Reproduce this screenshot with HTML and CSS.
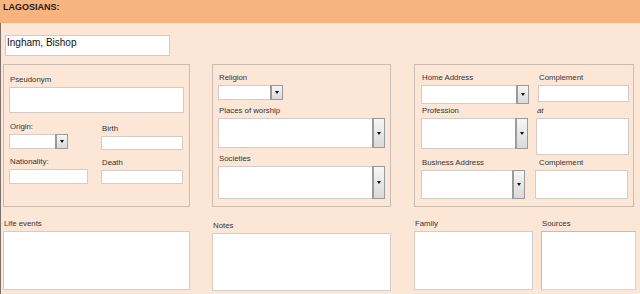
FILE: index.html
```html
<!DOCTYPE html>
<html lang="en">
<head>
<meta charset="utf-8">
<title>Lagosians</title>
<link rel="stylesheet" href="styles.css">
</head>
<body>
<header class="title-bar">LAGOSIANS:</header>
<main class="form">
  <div class="name-box">Ingham, Bishop</div>

  <div class="groups">
    <section class="group group-personal">
      <div class="field f-pseudo">
        <label class="lbl">Pseudonym</label>
        <div class="box pseudo"></div>
      </div>
      <div class="pair">
        <div class="col col-l1">
          <div class="field f-origin">
            <label class="lbl">Origin:</label>
            <div class="box combo origin"><span class="drop"><i class="tri"></i></span></div>
          </div>
          <div class="field f-nat">
            <label class="lbl">Nationality:</label>
            <div class="box nat"></div>
          </div>
        </div>
        <div class="col col-r1">
          <div class="field f-birth">
            <label class="lbl">Birth</label>
            <div class="box date"></div>
          </div>
          <div class="field f-death">
            <label class="lbl">Death</label>
            <div class="box date"></div>
          </div>
        </div>
      </div>
    </section>

    <section class="group group-faith">
      <div class="field f-religion">
        <label class="lbl">Religion</label>
        <div class="box combo religion"><span class="drop"><i class="tri"></i></span></div>
      </div>
      <div class="field f-places">
        <label class="lbl">Places of worship</label>
        <div class="box combo places"><span class="drop"><i class="tri"></i></span></div>
      </div>
      <div class="field f-soc">
        <label class="lbl">Societies</label>
        <div class="box combo soc"><span class="drop"><i class="tri"></i></span></div>
      </div>
    </section>

    <section class="group group-address">
      <div class="col col-l3">
        <div class="field f-home">
          <label class="lbl">Home Address</label>
          <div class="box combo home"><span class="drop"><i class="tri"></i></span></div>
        </div>
        <div class="field f-prof">
          <label class="lbl">Profession</label>
          <div class="box combo prof"><span class="drop"><i class="tri"></i></span></div>
        </div>
        <div class="field f-bus">
          <label class="lbl">Business Address</label>
          <div class="box combo bus"><span class="drop"><i class="tri"></i></span></div>
        </div>
      </div>
      <div class="col col-r3">
        <div class="field f-comp1">
          <label class="lbl">Complement</label>
          <div class="box comp1"></div>
        </div>
        <div class="field f-at">
          <label class="lbl lbl-it">at</label>
          <div class="box at"></div>
        </div>
        <div class="field f-comp2">
          <label class="lbl">Complement</label>
          <div class="box comp2"></div>
        </div>
      </div>
    </section>
  </div>

  <div class="bottom">
    <div class="field f-life">
      <label class="lbl">Life events</label>
      <div class="box memo life"></div>
    </div>
    <div class="field f-notes">
      <label class="lbl">Notes</label>
      <div class="box memo notes"></div>
    </div>
    <div class="field f-family">
      <label class="lbl">Family</label>
      <div class="box memo family"></div>
    </div>
    <div class="field f-sources">
      <label class="lbl">Sources</label>
      <div class="box memo sources"></div>
    </div>
  </div>
</main>
</body>
</html>
```

FILE: styles.css
```css
* { box-sizing: border-box; margin: 0; padding: 0; }

html, body {
  width: 640px;
  height: 294px;
  overflow: hidden;
}

body {
  background: #fce7d6;
  font-family: "Liberation Sans", Arial, sans-serif;
  color: #262626;
}

.title-bar {
  height: 23px;
  background: #f8b47e;
  padding: 2px 0 0 3px;
  font-size: 9px;
  line-height: 11px;
  font-weight: bold;
  color: #1a1a1a;
}

.form {
  height: 271px;
  border-left: 1px solid #7b716a;
  padding: 12px 0 0 2px;
}

.name-box {
  margin-left: 2px;
  width: 165px;
  height: 21px;
  background: #fff;
  border: 1px solid #d2cbc5;
  padding-left: 1px;
  font-size: 10px;
  line-height: 14px;
  color: #111;
}

/* rows */
.groups {
  display: flex;
  margin-top: 8px;
}

.group {
  height: 143px;
  border: 1px solid #c9bdb2;
  padding-top: 0;
}

.group-personal { width: 187px; padding-left: 5px; }
.group-faith    { width: 179px; margin-left: 22px; padding-left: 5px; }
.group-address  { width: 220px; margin-left: 23px; padding-left: 6px; display: flex; }

.field { display: flex; flex-direction: column; align-items: flex-start; }

.lbl {
  display: block;
  height: 10px;
  font-size: 7.8px;
  line-height: 10px;
  padding-left: 1px;
  margin-bottom: 2px;
  color: #333;
  white-space: nowrap;
}
.lbl-it { font-style: italic; padding-left: 2px; }

.box {
  background: #fff;
  border: 1px solid #d4cdc7;
  position: relative;
}

.combo { display: flex; justify-content: flex-end; }

.drop {
  width: 11px;
  height: 100%;
  border-left: 1px solid #9c9c9c;
  outline: 1px solid #9a9a9a;
  outline-offset: 0;
  background: linear-gradient(#f6f6f6, #d9d9d9);
  display: flex;
  align-items: center;
  justify-content: center;
}

.tri {
  display: block;
  width: 0;
  height: 0;
  border-left: 2.5px solid transparent;
  border-right: 2.5px solid transparent;
  border-top: 3px solid #111;
}

/* personal group */
.f-pseudo { margin-top: 10px; }
.pseudo { width: 175px; height: 26px; }

.pair { display: flex; }
.col-l1 { width: 92px; }
.col-r1 { width: 82px; }

.f-origin { margin-top: 9px; }
.origin { width: 59px; height: 15px; }
.f-nat { margin-top: 8px; }
.nat { width: 79px; height: 15px; }

.f-birth { margin-top: 11px; }
.f-death { margin-top: 8px; }
.date { width: 82px; height: 14px; }

/* faith group */
.f-religion { margin-top: 8px; }
.religion { width: 65px; height: 15px; }
.f-places { margin-top: 6px; }
.places { width: 167px; height: 30px; }
.f-soc { margin-top: 6px; }
.soc { width: 167px; height: 33px; }

/* address group */
.col-l3 { width: 114px; }
.col-r3 { width: 95px; }

.f-home { margin-top: 8px; }
.home { width: 108px; height: 19px; }
.f-prof { margin-top: 2px; }
.prof { width: 107px; height: 31px; }
.f-bus { margin-top: 9px; }
.bus { width: 104px; height: 29px; }

.f-comp1 { margin-top: 8px; }
.f-comp1 .lbl { padding-left: 4px; }
.comp1 { width: 91px; height: 17px; margin-left: 3px; }
.f-at { margin-top: 4px; }
.at { width: 93px; height: 37px; margin-left: 1px; }
.f-comp2 { margin-top: 3px; }
.f-comp2 .lbl { padding-left: 4px; }
.comp2 { width: 93px; height: 29px; }

/* bottom row */
.bottom {
  display: flex;
  margin-top: 12px;
}

.memo { height: 59px; }
.life    { width: 187px; }
.f-notes { margin-left: 22px; margin-top: 2px; }
.notes   { width: 179px; height: 58px; }
.f-family { margin-left: 23px; }
.family  { width: 119px; }
.f-sources { margin-left: 8px; }
.sources {
  width: 95px;
  border-color: #bdbdbd #d6d6d6 #d6d6d6 #bdbdbd;
}
```
